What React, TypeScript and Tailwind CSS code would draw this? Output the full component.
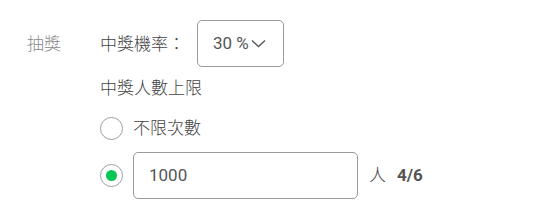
import React from 'react'

const font = { fontFamily: '"Roboto", "Noto Sans CJK TC", sans-serif' }

function Radio({ checked }: { checked?: boolean }) {
  return (
    <span className="flex h-[23px] w-[23px] shrink-0 items-center justify-center rounded-full border border-[#a0a0a0] bg-white">
      {checked && <span className="h-[11px] w-[11px] rounded-full bg-[#06c755]" />}
    </span>
  )
}

export default function App() {
  return (
    <div className="h-[212px] w-[552px] bg-white text-[17px] font-light text-[#444]" style={font}>
      <div className="flex pt-[20px]">
        {/* Label */}
        <div className="w-[100px] shrink-0 pl-[27px] pt-[12px] leading-[24px] text-[#8a8a8a]">抽獎</div>

        <div className="flex flex-col">
          {/* Probability */}
          <div className="flex items-center">
            <span className="leading-[24px]">中獎機率：</span>
            <button className="ml-[12px] flex h-[47px] w-[87px] items-center rounded-[5px] border border-[#9a9a9a] pl-[15px] text-[#555]">
              <span className="text-[17px] font-normal">30 %</span>
              <svg className="ml-[2px]" width="15" height="9" viewBox="0 0 15 9" fill="none">
                <path d="M1 1.5 7.5 7.5 14 1.5" stroke="#555" strokeWidth="1.3" />
              </svg>
            </button>
          </div>

          {/* Limit */}
          <div className="mt-[9px] leading-[24px]">中獎人數上限</div>

          <div className="mt-[16px] flex items-center gap-[10px] leading-[24px]">
            <Radio />
            <span>不限次數</span>
          </div>

          <div className="mt-[12px] flex items-center">
            <Radio checked />
            <div className="ml-[10px] flex h-[47px] w-[225px] items-center rounded-[5px] border border-[#9a9a9a] pl-[15px] text-[17px] font-normal text-[#555]">
              1000
            </div>
            <span className="ml-[11px]">人</span>
            <span className="ml-[11px] text-[17px] font-bold text-[#555]">4/6</span>
          </div>
        </div>
      </div>
    </div>
  )
}
